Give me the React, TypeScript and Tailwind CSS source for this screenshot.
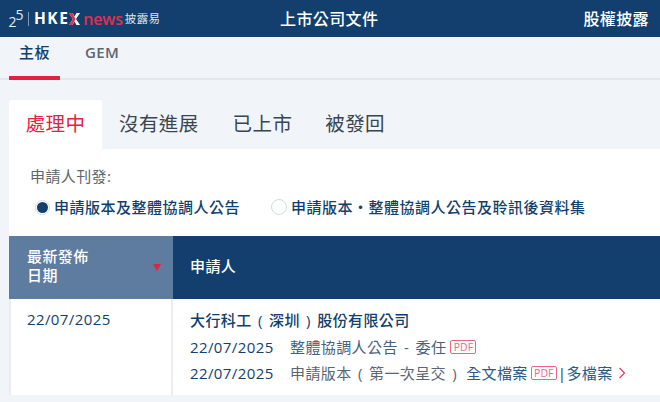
const cjk = { fontFamily: '"Open Sans","Noto Sans CJK TC",sans-serif' };

function Pdf() {
  return (
    <span className="inline-flex h-[14px] w-[26px] items-center justify-center rounded-[2px] border-[1.500px] border-[#e8697f] text-[10.500px] leading-none tracking-normal text-[#e8697f]">
      PDF
    </span>
  );
}

export default function App() {
  return (
    <div className="h-[402px] w-[660px] overflow-hidden bg-[#f1f5f9] tracking-[0.4px]" style={cjk}>
      <header className="flex h-[37px] items-center bg-[#123f6d] pl-[9px] text-white">
        <div className="flex w-[271px] items-center">
          <svg width="15" height="18" viewBox="0 0 15 18" fill="#e6edf4" className="overflow-visible" style={{ fontFamily: '"Open Sans",sans-serif', fontWeight: 400 }}>
            <text x="-0.500" y="17" fontSize="14">2</text>
            <text x="6.500" y="10" fontSize="14">5</text>
          </svg>
          <span className="ml-[4px] mr-[5px] h-[14px] w-px bg-[#7e9bb8]" />
          <span className="text-[15.500px] font-bold leading-none tracking-[1.500px] text-white">HKE</span>
          <svg width="11" height="12" viewBox="0 0 11 12" className="mr-[3px]">
            <path d="M0 0h3.500l2 3.500L7.500 0H11L7 6l4 6H7.500l-2-3.500-2 3.500H0l4-6z" fill="#fff" />
            <path d="M0 0h3.500l3 6-3 6H0l4-6z" fill="#e0304f" />
          </svg>
          <span className="text-[16px] font-semibold leading-none tracking-[-0.2px] text-[#e0304f]">news</span>
          <span className="ml-[2px] text-[11.500px] leading-none text-[#dfe7ef]">披露易</span>
        </div>
        <div className="text-base font-medium">上市公司文件</div>
        <div className="ml-[205px] text-base font-medium">股權披露</div>
      </header>

      <nav className="flex h-[43px] border-b-2 border-[#e3e8ed] pl-[9px] text-[15px]">
        <div className="h-[43px] w-[51px] border-b-4 border-[#e0243f] pt-[4px] text-center font-medium text-[#123f6d]">主板</div>
        <div className="pl-[25px] pt-[4px] font-semibold text-[#5c6670]">GEM</div>
      </nav>

      <div className="mt-[20px] flex h-[49px] pl-[9px] text-[19.500px] leading-[47px] text-[#3a4550]">
        <div className="w-[93px] rounded-t-[3px] bg-white text-center text-[#e0243f]">處理中</div>
        <div className="ml-[17px]">沒有進展</div>
        <div className="ml-[34px]">已上市</div>
        <div className="ml-[33px]">被發回</div>
      </div>

      <section className="ml-[9px] h-[87px] bg-white pl-[21px] pt-[17px]">
        <div className="text-[15px] leading-[20px] text-[#5c6670]">申請人刊發:</div>
        <div className="mt-[11px] flex items-center text-[15px] font-medium leading-[20px] tracking-[0.5px] text-[#123f6d]">
          <span className="ml-[5px] mr-[4px] flex h-[15px] w-[15px] items-center justify-center rounded-full border border-[#d5dbe1]">
            <span className="h-[11px] w-[11px] rounded-full bg-[#123f6d]" />
          </span>
          <span>申請版本及整體協調人公告</span>
          <span className="ml-[31px] mr-[4px] h-[16px] w-[16px] rounded-full border border-[#d5dbe1]" />
          <span>申請版本・整體協調人公告及聆訊後資料集</span>
        </div>
      </section>

      <div className="ml-[9px] flex h-[63px] text-white">
        <div className="relative flex w-[164px] items-center bg-[#5e7ba0] pb-[3px] pl-[18px] text-[15px] font-medium leading-[19px]">
          <div>最新發佈<br />日期</div>
          <span className="absolute left-[144px] top-[28px] h-0 w-0 border-x-[4.500px] border-t-[7px] border-x-transparent border-t-[#e0243f]" />
        </div>
        <div className="flex flex-1 items-center bg-[#123f6d] pb-[2px] pl-[17px] text-[15px] font-medium">申請人</div>
      </div>
      <div className="ml-[9px] flex h-[96px] bg-white">
        <div className="w-[164px] border-x-2 border-[#e9edf1] pl-[16px] pt-[10px] text-[15px] leading-[20px] text-[#123f6d]">22/07/2025</div>
        <div className="flex-1 pl-[17px] pt-[11px] text-[15px] leading-[20px] [word-spacing:2px]">
          <div className="font-medium text-[#123f6d]">大行科工 ( 深圳 ) 股份有限公司</div>
          <div className="mt-[7px] flex items-center text-[#123f6d]">
            <span className="w-[100px]">22/07/2025</span>
            <span className="text-[#47617c]">整體協調人公告 - 委任</span>
            <span className="ml-[4px] flex"><Pdf /></span>
          </div>
          <div className="mt-[6px] flex items-center text-[#123f6d]">
            <span className="w-[100px]">22/07/2025</span>
            <span className="text-[#5c6670]">申請版本 ( 第一次呈交 )</span>
            <span className="ml-[9px] text-[#2c5a85]">全文檔案</span>
            <span className="ml-[3px] flex"><Pdf /></span>
            <span className="ml-[1px]">|</span>
            <span className="text-[#2c5a85]">多檔案</span>
            <svg width="8" height="12" viewBox="0 0 8 12" fill="none" stroke="#e0405a" strokeWidth="1.200" className="ml-[5px]"><path d="M1.500 1l5 5-5 5" /></svg>
          </div>
        </div>
      </div>
    </div>
  );
}
